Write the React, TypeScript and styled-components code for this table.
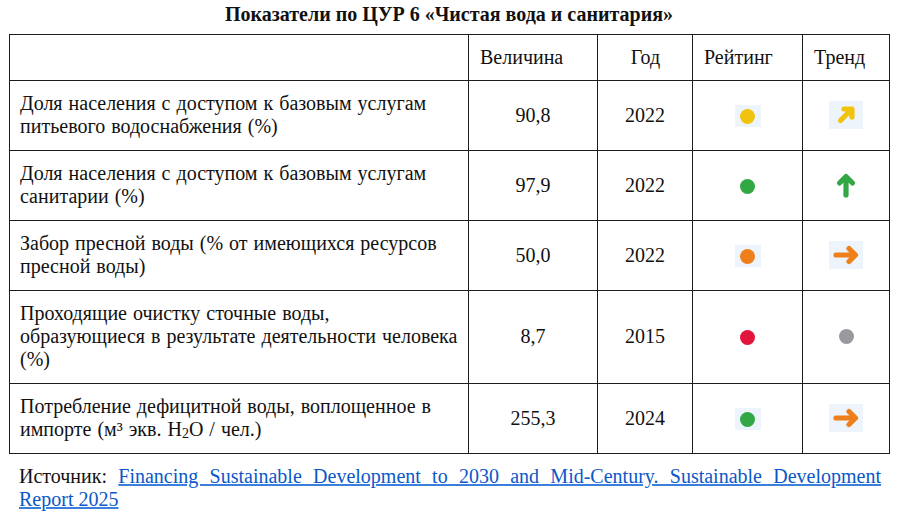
import React from 'react';
import styled, { createGlobalStyle } from 'styled-components';

type Tone = 'yellow' | 'green' | 'orange' | 'red' | 'grey';
type Trend = 'upRight' | 'up' | 'right' | 'none';

interface Indicator {
  lines: React.ReactNode[];
  value: string;
  year: string;
  rating: Tone;
  trend: Trend;
  trendTone: Tone;
  boxed: boolean;
}

const tones: Record<Tone, string> = {
  yellow: '#f0c30f',
  green: '#33a744',
  orange: '#ef7f1a',
  red: '#e2153c',
  grey: '#9a9a9e',
};

const GlobalStyle = createGlobalStyle`
  body {
    margin: 0;
    background: #ffffff;
    font-family: "Liberation Serif", "Times New Roman", serif;
    color: #111111;
  }
`;

const Page = styled.div`
  width: 900px;
  height: 519px;
  box-sizing: border-box;
  padding: 3px 11px 0 9px;
`;

const Title = styled.h1`
  margin: 0 0 9px;
  text-align: center;
  font-size: 20px;
  line-height: 22px;
  font-weight: bold;
`;

const Table = styled.table`
  width: 880px;
  border-collapse: collapse;
  table-layout: fixed;
  font-size: 20px;
  line-height: 23px;
`;

const HeadCell = styled.th<{ $center?: boolean }>`
  border: 1px solid #1c1c1c;
  padding: 11px 10px 11px 11px;
  font-weight: normal;
  text-align: ${({ $center }) => ($center ? 'center' : 'left')};
  vertical-align: middle;
`;

const LabelCell = styled.td`
  border: 1px solid #1c1c1c;
  padding: 11px 10px 12px;
  text-align: left;
  vertical-align: middle;
  word-spacing: 1px;
`;

const Cell = styled.td`
  border: 1px solid #1c1c1c;
  padding: 11px 4px 12px;
  text-align: center;
  vertical-align: middle;
`;

const Line = styled.span`
  display: block;
  white-space: nowrap;
`;

const Sub = styled.sub`
  font-size: 0.7em;
  line-height: 0;
  vertical-align: -0.15em;
`;

const Badge = styled.span<{ $boxed: boolean; $w: number; $h: number }>`
  display: inline-flex;
  align-items: center;
  justify-content: center;
  width: ${({ $w }) => $w}px;
  height: ${({ $h }) => $h}px;
  background: ${({ $boxed }) => ($boxed ? '#eef4fc' : 'transparent')};
  vertical-align: middle;
`;

const Dot = styled.span<{ $tone: Tone }>`
  display: block;
  width: 15px;
  height: 15px;
  border-radius: 50%;
  background: ${({ $tone }) => tones[$tone]};
`;

const Source = styled.p`
  margin: 11px 8px 0 10px;
  font-size: 20px;
  line-height: 23px;
  text-align: justify;
`;

const Link = styled.a`
  color: #0a58c8;
  text-decoration: underline;
  text-decoration-color: #3a7fdc;
`;

const TrendIcon: React.FC<{ kind: Trend; tone: Tone }> = ({ kind, tone }) => {
  const color = tones[tone];
  if (kind === 'none') return <Dot $tone={tone} />;
  const paths: Record<Exclude<Trend, 'none'>, string> = {
    upRight: 'M7.5 18.5 L18.5 7.5 M11 7 H19 V15',
    up: 'M13 23 V4.5 M6.5 11 L13 4.5 L19.5 11',
    right: 'M3 13 H22 M16 6.5 L22.5 13 L16 19.5',
  };
  return (
    <svg width="26" height="26" viewBox="0 0 26 26" fill="none">
      <path
        d={paths[kind]}
        stroke={color}
        strokeWidth="5.2"
        strokeLinecap="round"
        strokeLinejoin="round"
      />
    </svg>
  );
};

const rows: Indicator[] = [
  {
    lines: ['Доля населения с доступом к базовым услугам', 'питьевого водоснабжения (%)'],
    value: '90,8',
    year: '2022',
    rating: 'yellow',
    trend: 'upRight',
    trendTone: 'yellow',
    boxed: true,
  },
  {
    lines: ['Доля населения с доступом к базовым услугам', 'санитарии (%)'],
    value: '97,9',
    year: '2022',
    rating: 'green',
    trend: 'up',
    trendTone: 'green',
    boxed: false,
  },
  {
    lines: ['Забор пресной воды (% от имеющихся ресурсов', 'пресной воды)'],
    value: '50,0',
    year: '2022',
    rating: 'orange',
    trend: 'right',
    trendTone: 'orange',
    boxed: true,
  },
  {
    lines: [
      'Проходящие  очистку сточные воды,',
      'образующиеся в результате деятельности человека',
      '(%)',
    ],
    value: '8,7',
    year: '2015',
    rating: 'red',
    trend: 'none',
    trendTone: 'grey',
    boxed: false,
  },
  {
    lines: [
      'Потребление дефицитной воды, воплощенное в',
      <>
        импорте (м³ экв. H<Sub>2</Sub>O / чел.)
      </>,
    ],
    value: '255,3',
    year: '2024',
    rating: 'green',
    trend: 'right',
    trendTone: 'orange',
    boxed: true,
  },
];

const App: React.FC = () => {
  return (
    <Page>
      <GlobalStyle />
      <Title>Показатели по ЦУР 6 «Чистая вода и санитария»</Title>
      <Table>
        <colgroup>
          <col style={{ width: 459 }} />
          <col style={{ width: 129 }} />
          <col style={{ width: 95 }} />
          <col style={{ width: 110 }} />
          <col style={{ width: 87 }} />
        </colgroup>
        <thead>
          <tr>
            <HeadCell />
            <HeadCell>Величина</HeadCell>
            <HeadCell $center>Год</HeadCell>
            <HeadCell>Рейтинг</HeadCell>
            <HeadCell>Тренд</HeadCell>
          </tr>
        </thead>
        <tbody>
          {rows.map((row, i) => (
            <tr key={i}>
              <LabelCell>
                {row.lines.map((line, j) => (
                  <Line key={j}>{line}</Line>
                ))}
              </LabelCell>
              <Cell>{row.value}</Cell>
              <Cell>{row.year}</Cell>
              <Cell>
                <Badge $boxed={row.boxed} $w={26} $h={22}>
                  <Dot $tone={row.rating} />
                </Badge>
              </Cell>
              <Cell>
                <Badge $boxed={row.boxed} $w={34} $h={28}>
                  <TrendIcon kind={row.trend} tone={row.trendTone} />
                </Badge>
              </Cell>
            </tr>
          ))}
        </tbody>
      </Table>
      <Source>
        Источник:{' '}
        <Link href="#">
          Financing Sustainable Development to 2030 and Mid-Century. Sustainable Development Report 2025
        </Link>
      </Source>
    </Page>
  );
};

export default App;
